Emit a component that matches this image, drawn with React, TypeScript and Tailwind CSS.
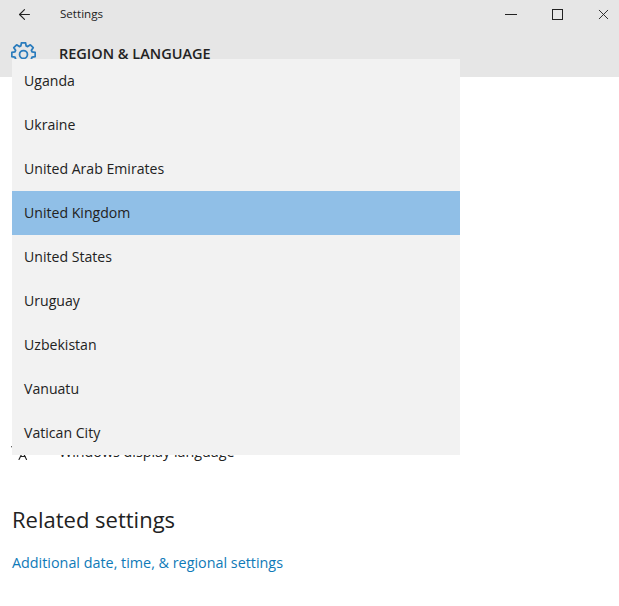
import { ArrowLeft, Languages, X } from "lucide-react";

const countries = [
  "Uganda",
  "Ukraine",
  "United Arab Emirates",
  "United Kingdom",
  "United States",
  "Uruguay",
  "Uzbekistan",
  "Vanuatu",
  "Vatican City",
];

// 8 toothed outline, like the Windows 10 settings gear
function gearPath() {
  const pts: string[] = [];
  for (let i = 0; i < 8; i++) {
    const a = (i * Math.PI) / 4;
    [
      [-0.3, 8.6],
      [-0.17, 11.4],
      [0.17, 11.4],
      [0.3, 8.6],
    ].forEach(([off, r]) => {
      const x = 12 + r * Math.cos(a + off);
      const y = 12 + r * Math.sin(a + off);
      pts.push(`${x.toFixed(2)} ${y.toFixed(2)}`);
    });
  }
  return `M${pts.join("L")}Z`;
}

function Gear() {
  return (
    <svg width="25" height="25" viewBox="0 0 24 24" fill="none" stroke="#2b7cbd" strokeWidth="1.7">
      <path d={gearPath()} strokeLinejoin="round" />
      <circle cx="12" cy="12" r="3.8" />
    </svg>
  );
}

function TitleBar() {
  return (
    <div className="flex h-7 items-center text-[#222]">
      <div className="flex w-[60px] pl-[16px]">
        <ArrowLeft size={17} strokeWidth={1.6} />
      </div>
      <div className="flex-1 text-[11.6px]">Settings</div>
      <div className="flex items-center">
        <div className="mr-[35px] h-px w-[12px] bg-[#222]"></div>
        <div className="mr-[32px] h-[11px] w-[11px] border border-[#222]"></div>
        <X size={17} strokeWidth={1.3} className="mr-[7px]" />
      </div>
    </div>
  );
}

function CountryList() {
  return (
    <div className="absolute left-[12px] top-[59px] w-[448px] bg-[#f2f2f2]">
      {countries.map((name) => (
        <div
          key={name}
          className={`flex h-11 items-center pl-3 text-[14.1px] text-[#222] ${
            name === "United Kingdom" ? "bg-[#90bfe7]" : ""
          }`}
        >
          {name}
        </div>
      ))}
    </div>
  );
}

export default function App() {
  return (
    <div className="relative h-[606px] w-[619px] overflow-hidden bg-white font-['Open_Sans',sans-serif]">
      <div className="h-[77px] bg-[#e6e6e6]">
        <TitleBar />
        <div className="flex h-[49px] items-start pt-[14px]">
          <div className="w-[59px] pl-[11px]">
            <Gear />
          </div>
          <div className="pt-[1px] text-[14.5px] font-semibold text-[#222]">
            REGION &amp; LANGUAGE
          </div>
        </div>
      </div>
      <div className="flex flex-col pl-[12px] pt-[364px]">
        <div className="flex h-[22px] items-center text-[14.3px] text-[#222]">
          <Languages size={18} strokeWidth={1.5} className="-ml-[2px] mr-[31px]" />
          Windows display language
        </div>
        <div className="mt-[41px] text-[22px] leading-[30px] text-[#222]">
          Related settings
        </div>
        <div className="mt-[19px] text-[14.35px] leading-5 text-[#0f7ab8]">
          Additional date, time, &amp; regional settings
        </div>
      </div>
      <CountryList />
    </div>
  );
}
